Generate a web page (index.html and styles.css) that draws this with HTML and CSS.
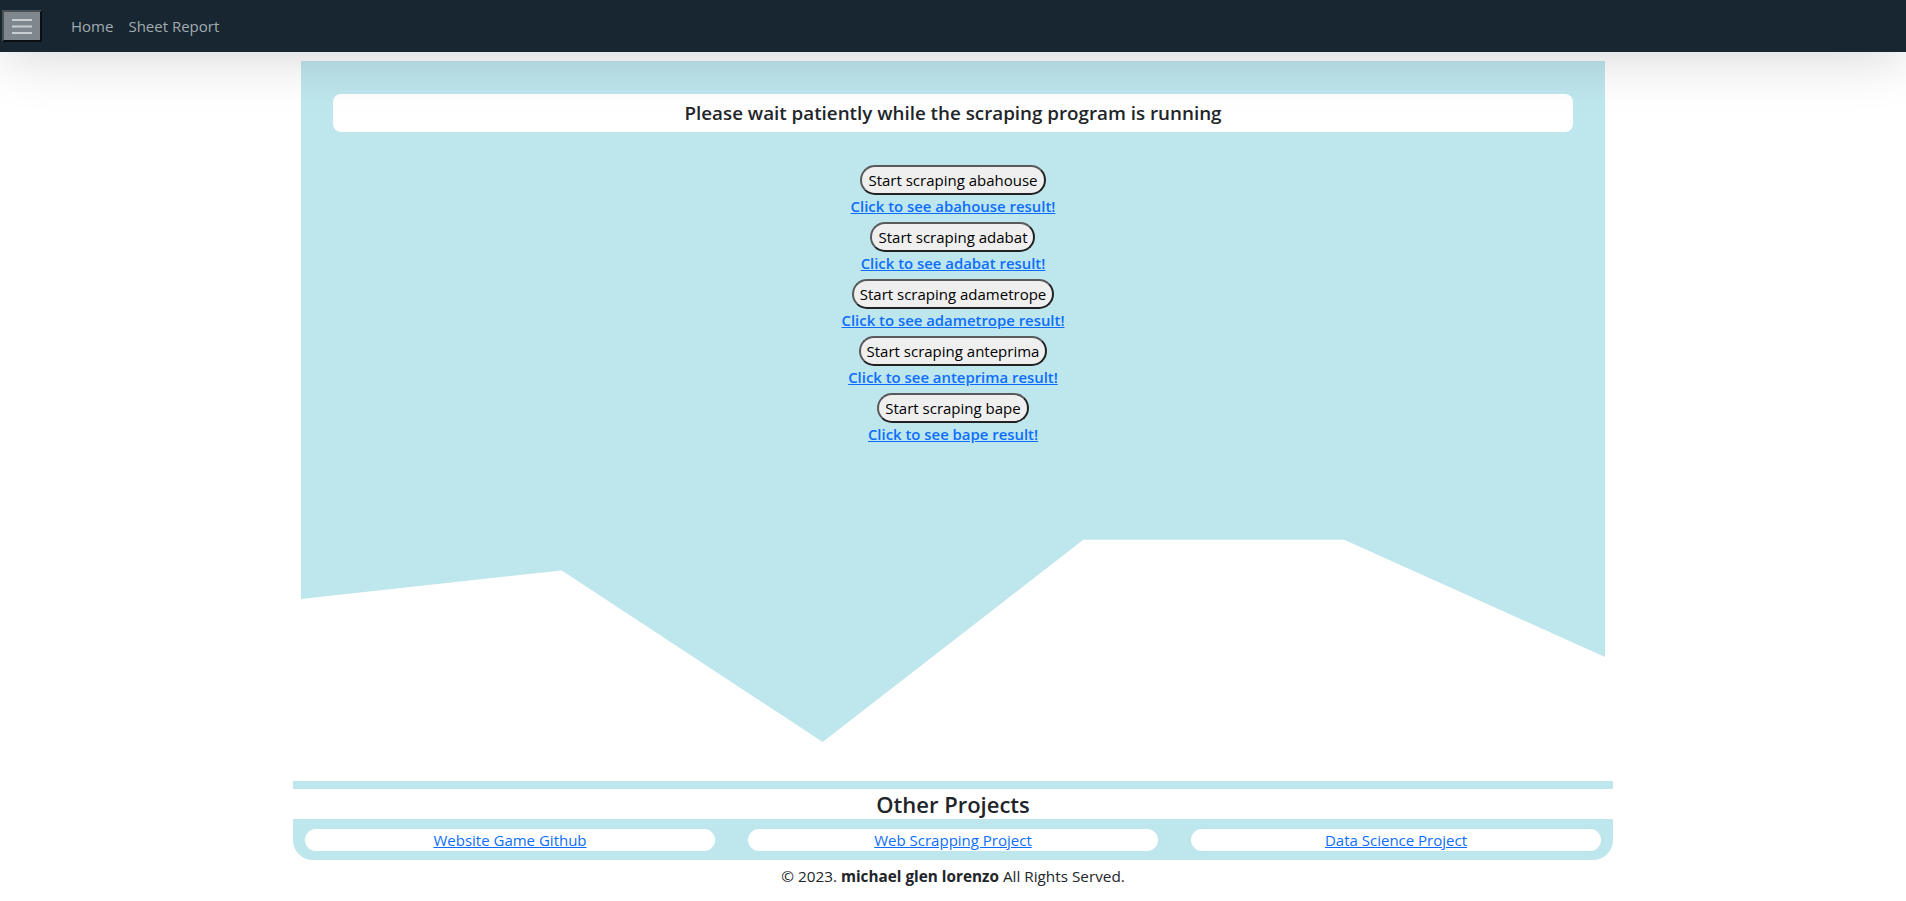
FILE: index.html
```html
<!DOCTYPE html>
<html lang="en">
<head>
<meta charset="utf-8">
<title>Scraper</title>
<link rel="stylesheet" href="styles.css">
</head>
<body>
<nav class="navbar">
  <button class="toggler" aria-label="menu">
    <svg width="22" height="16" viewBox="0 0 22 16"><path d="M1 2h20M1 8.5h20M1 15h20" stroke="#c9cdd0" stroke-width="2"/></svg>
  </button>
  <div class="nav-links">
    <a href="#" class="nav-link">Home</a>
    <a href="#" class="nav-link">Sheet Report</a>
  </div>
</nav>

<main class="panel">
  <h5 class="notice">Please wait patiently while the scraping program is running</h5>
  <div class="scrapers">
    <div class="scraper"><button class="scrape-btn">Start scraping abahouse</button><a href="#" class="result">Click to see abahouse result!</a></div>
    <div class="scraper"><button class="scrape-btn">Start scraping adabat</button><a href="#" class="result">Click to see adabat result!</a></div>
    <div class="scraper"><button class="scrape-btn">Start scraping adametrope</button><a href="#" class="result">Click to see adametrope result!</a></div>
    <div class="scraper"><button class="scrape-btn">Start scraping anteprima</button><a href="#" class="result">Click to see anteprima result!</a></div>
    <div class="scraper"><button class="scrape-btn">Start scraping bape</button><a href="#" class="result">Click to see bape result!</a></div>
  </div>
</main>

<footer class="footer">
  <div class="footer-bar"></div>
  <h4 class="footer-title">Other Projects</h4>
  <div class="projects">
    <div class="pill"><a href="#">Website Game Github</a></div>
    <div class="pill"><a href="#">Web Scrapping Project</a></div>
    <div class="pill"><a href="#">Data Science Project</a></div>
  </div>
  <p class="copyright">© 2023. <b>michael glen lorenzo</b> All Rights Served.</p>
</footer>
</body>
</html>
```
FILE: styles.css
```css
* { box-sizing: border-box; }
body {
  margin: 0;
  font-family: "Open Sans", "Noto Sans", sans-serif;
  font-size: 15px;
  color: #212529;
  background: #fff;
}
.navbar {
  position: relative;
  z-index: 2;
  height: 52px;
  background: #172630;
  display: flex;
  align-items: center;
  box-shadow: 0 0 60px rgba(0,0,0,0.2);
}
.toggler {
  margin-left: 2px;
  width: 40px;
  height: 32px;
  padding: 0;
  background: #7d878d;
  border: 2px solid;
  border-color: #4a4f53 #0b0f12 #0b0f12 #4a4f53;
  display: flex;
  align-items: center;
  justify-content: center;
}
.nav-links {
  display: flex;
  gap: 15px;
  margin-left: 29px;
}
.nav-link {
  color: #a3abb1;
  text-decoration: none;
  font-size: 15px;
}
.panel {
  position: relative;
  z-index: 1;
  width: 1304px;
  height: 681px;
  margin: 9px auto 0;
  padding: 33px 32px;
  background: #bee6ed;
  clip-path: polygon(0 0, 100% 0, 100% 87.5%, 80% 70.3%, 60% 70.3%, 40% 100%, 20% 74.8%, 0 79%);
}
.notice {
  margin: 0 0 33px;
  height: 38px;
  background: #fff;
  border-radius: 8px;
  display: flex;
  align-items: center;
  justify-content: center;
  font-size: 18.8px;
  font-weight: 600;
}
.scrapers {
  display: flex;
  flex-direction: column;
  align-items: center;
  gap: 4px;
}
.scraper {
  display: flex;
  flex-direction: column;
  align-items: center;
}
.scrape-btn {
  height: 30px;
  padding: 0 6px;
  font-family: inherit;
  font-size: 15px;
  color: #000;
  background: #efefef;
  border: 2px solid;
  border-color: #5a5a5a #222 #222 #5a5a5a;
  border-radius: 15px;
}
.result {
  line-height: 23px;
  color: #0d6efd;
  font-weight: 600;
  font-size: 14.9px;
  text-decoration: underline;
}
.footer {
  width: 1320px;
  margin: 39px auto 0;
  text-align: center;
}
.footer-bar {
  height: 8px;
  background: #bee6ed;
}
.footer-title {
  margin: 0;
  height: 30px;
  line-height: 30px;
  font-size: 22px;
  font-weight: 600;
}
.projects {
  display: grid;
  grid-template-columns: repeat(3, 1fr);
  gap: 33px;
  padding: 10px 12px 9px;
  background: #bee6ed;
  border-radius: 0 0 20px 20px;
}
.pill {
  height: 22px;
  line-height: 22px;
  background: #fff;
  border-radius: 11px;
}
.pill a {
  color: #0d6efd;
  font-size: 15px;
}
.copyright {
  margin: 6px 0 0;
  font-size: 15.3px;
}
```
